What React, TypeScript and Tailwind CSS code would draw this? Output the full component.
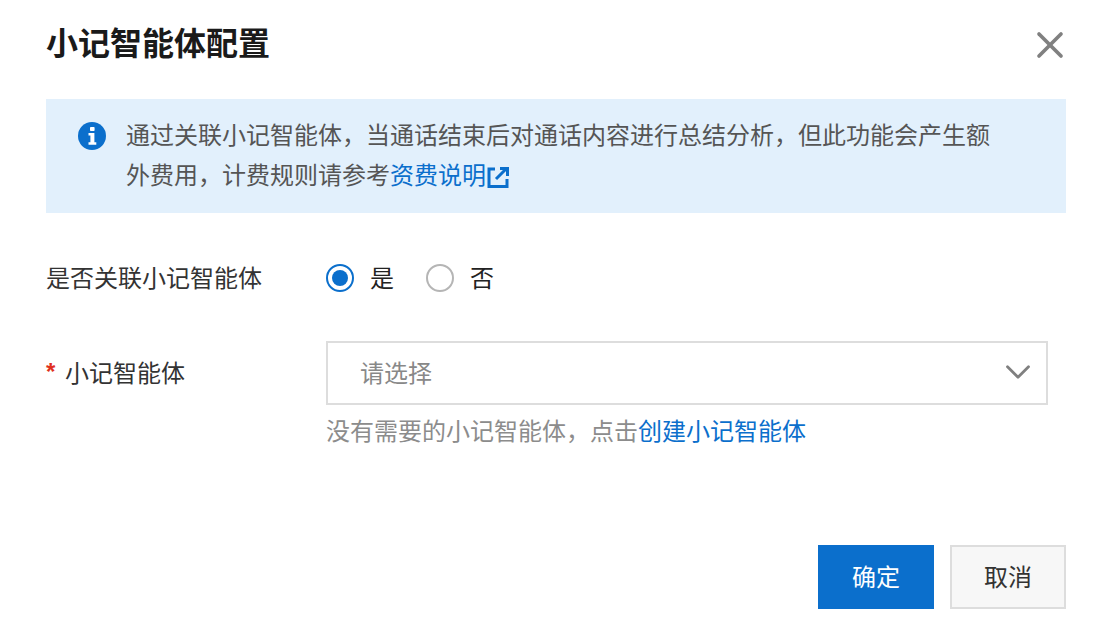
import { ChevronDown, X } from 'lucide-react';

const font = { fontFamily: '"Liberation Sans", "Noto Sans CJK SC", sans-serif' };

function InfoIcon() {
  return (
    <svg width="28" height="28" viewBox="0 0 28 28" className="shrink-0">
      <circle cx="14" cy="14" r="14" fill="#0b6fcc" />
      <rect x="12" y="5" width="4.6" height="4" rx="0.8" fill="#fff" />
      <path d="M10.5 11h5.9v9.2h1.9v2.6h-7.8v-2.6h1.9v-6.6h-1.9z" fill="#fff" />
    </svg>
  );
}

function ExternalIcon() {
  return (
    <svg width="22" height="22" viewBox="0 0 22 22" className="ml-[1px] inline-block align-[-4px]" fill="none" stroke="#0b6fcc" strokeWidth="3">
      <path d="M8 3H2v17.5h18V13" />
      <path d="M9 13 19 3" />
      <path d="M13 2.5h7.5V10" />
    </svg>
  );
}

function Radio({ checked, label }: { checked?: boolean; label: string }) {
  return (
    <label className="flex h-10 items-center gap-4">
      <span
        className={`flex h-7 w-7 items-center justify-center rounded-full border-2 ${
          checked ? 'border-[#0b6fcc]' : 'border-[#b5b5b5]'
        }`}
      >
        {checked && <span className="h-4 w-4 rounded-full bg-[#0b6fcc]" />}
      </span>
      <span className="translate-y-[1px] text-[#222]">{label}</span>
    </label>
  );
}

export default function App() {
  return (
    <div className="h-[630px] w-[1108px] overflow-hidden bg-white pl-[46px] pr-[42px] text-[24px] leading-[40px]" style={font}>
      {/* Header */}
      <div className="flex h-[99px] items-start justify-between pt-[24px]">
        <h1 className="text-[32px] font-bold leading-[40px] text-[#1a1a1a]">小记智能体配置</h1>
        <X className="mr-[-6px] mt-[-1px] h-[44px] w-[44px] text-[#808080]" strokeWidth={2} />
      </div>

      {/* Notice */}
      <div className="flex h-[114px] gap-[20px] bg-[#e2f0fc] pl-[32px] pt-[17px] text-[#555]">
        <div className="pt-[6px]">
          <InfoIcon />
        </div>
        <div>
          <p>通过关联小记智能体，当通话结束后对通话内容进行总结分析，但此功能会产生额</p>
          <p>
            外费用，计费规则请参考<span className="text-[#0b6fcc]">资费说明</span>
            <ExternalIcon />
          </p>
        </div>
      </div>

      {/* Form */}
      <div className="mt-[45px] flex h-10 items-center">
        <div className="w-[280px] translate-y-[1px] text-[#333]">是否关联小记智能体</div>
        <div className="flex gap-8">
          <Radio checked label="是" />
          <Radio label="否" />
        </div>
      </div>

      <div className="mt-[43px] flex">
        <div className="flex w-[280px] pt-[13px] text-[#333]">
          <span className="mr-[9px] w-[10px] text-[24px] font-bold leading-[36px] text-[#e0301e]">*</span>
          小记智能体
        </div>
        <div className="w-[722px]">
          <div className="flex h-[64px] items-center justify-between border-2 border-[#ddd] pl-[32px] pr-[7px] text-[#888]">
            <span className="translate-y-[1px]">请选择</span>
            <ChevronDown className="mt-[-3px] h-[42px] w-[42px] text-[#808080]" strokeWidth={1.6} />
          </div>
          <p className="mt-[7px] text-[#8c8c8c]">
            没有需要的小记智能体，点击<span className="text-[#0b6fcc]">创建小记智能体</span>
          </p>
        </div>
      </div>

      {/* Footer */}
      <div className="mt-[93px] flex justify-end gap-4">
        <button className="h-16 w-[116px] bg-[#0b6fcc] pt-[1px] text-white">确定</button>
        <button className="h-16 w-[116px] border-2 border-[#ddd] bg-[#f7f7f7] pt-[1px] text-[#333]">取消</button>
      </div>
    </div>
  );
}
